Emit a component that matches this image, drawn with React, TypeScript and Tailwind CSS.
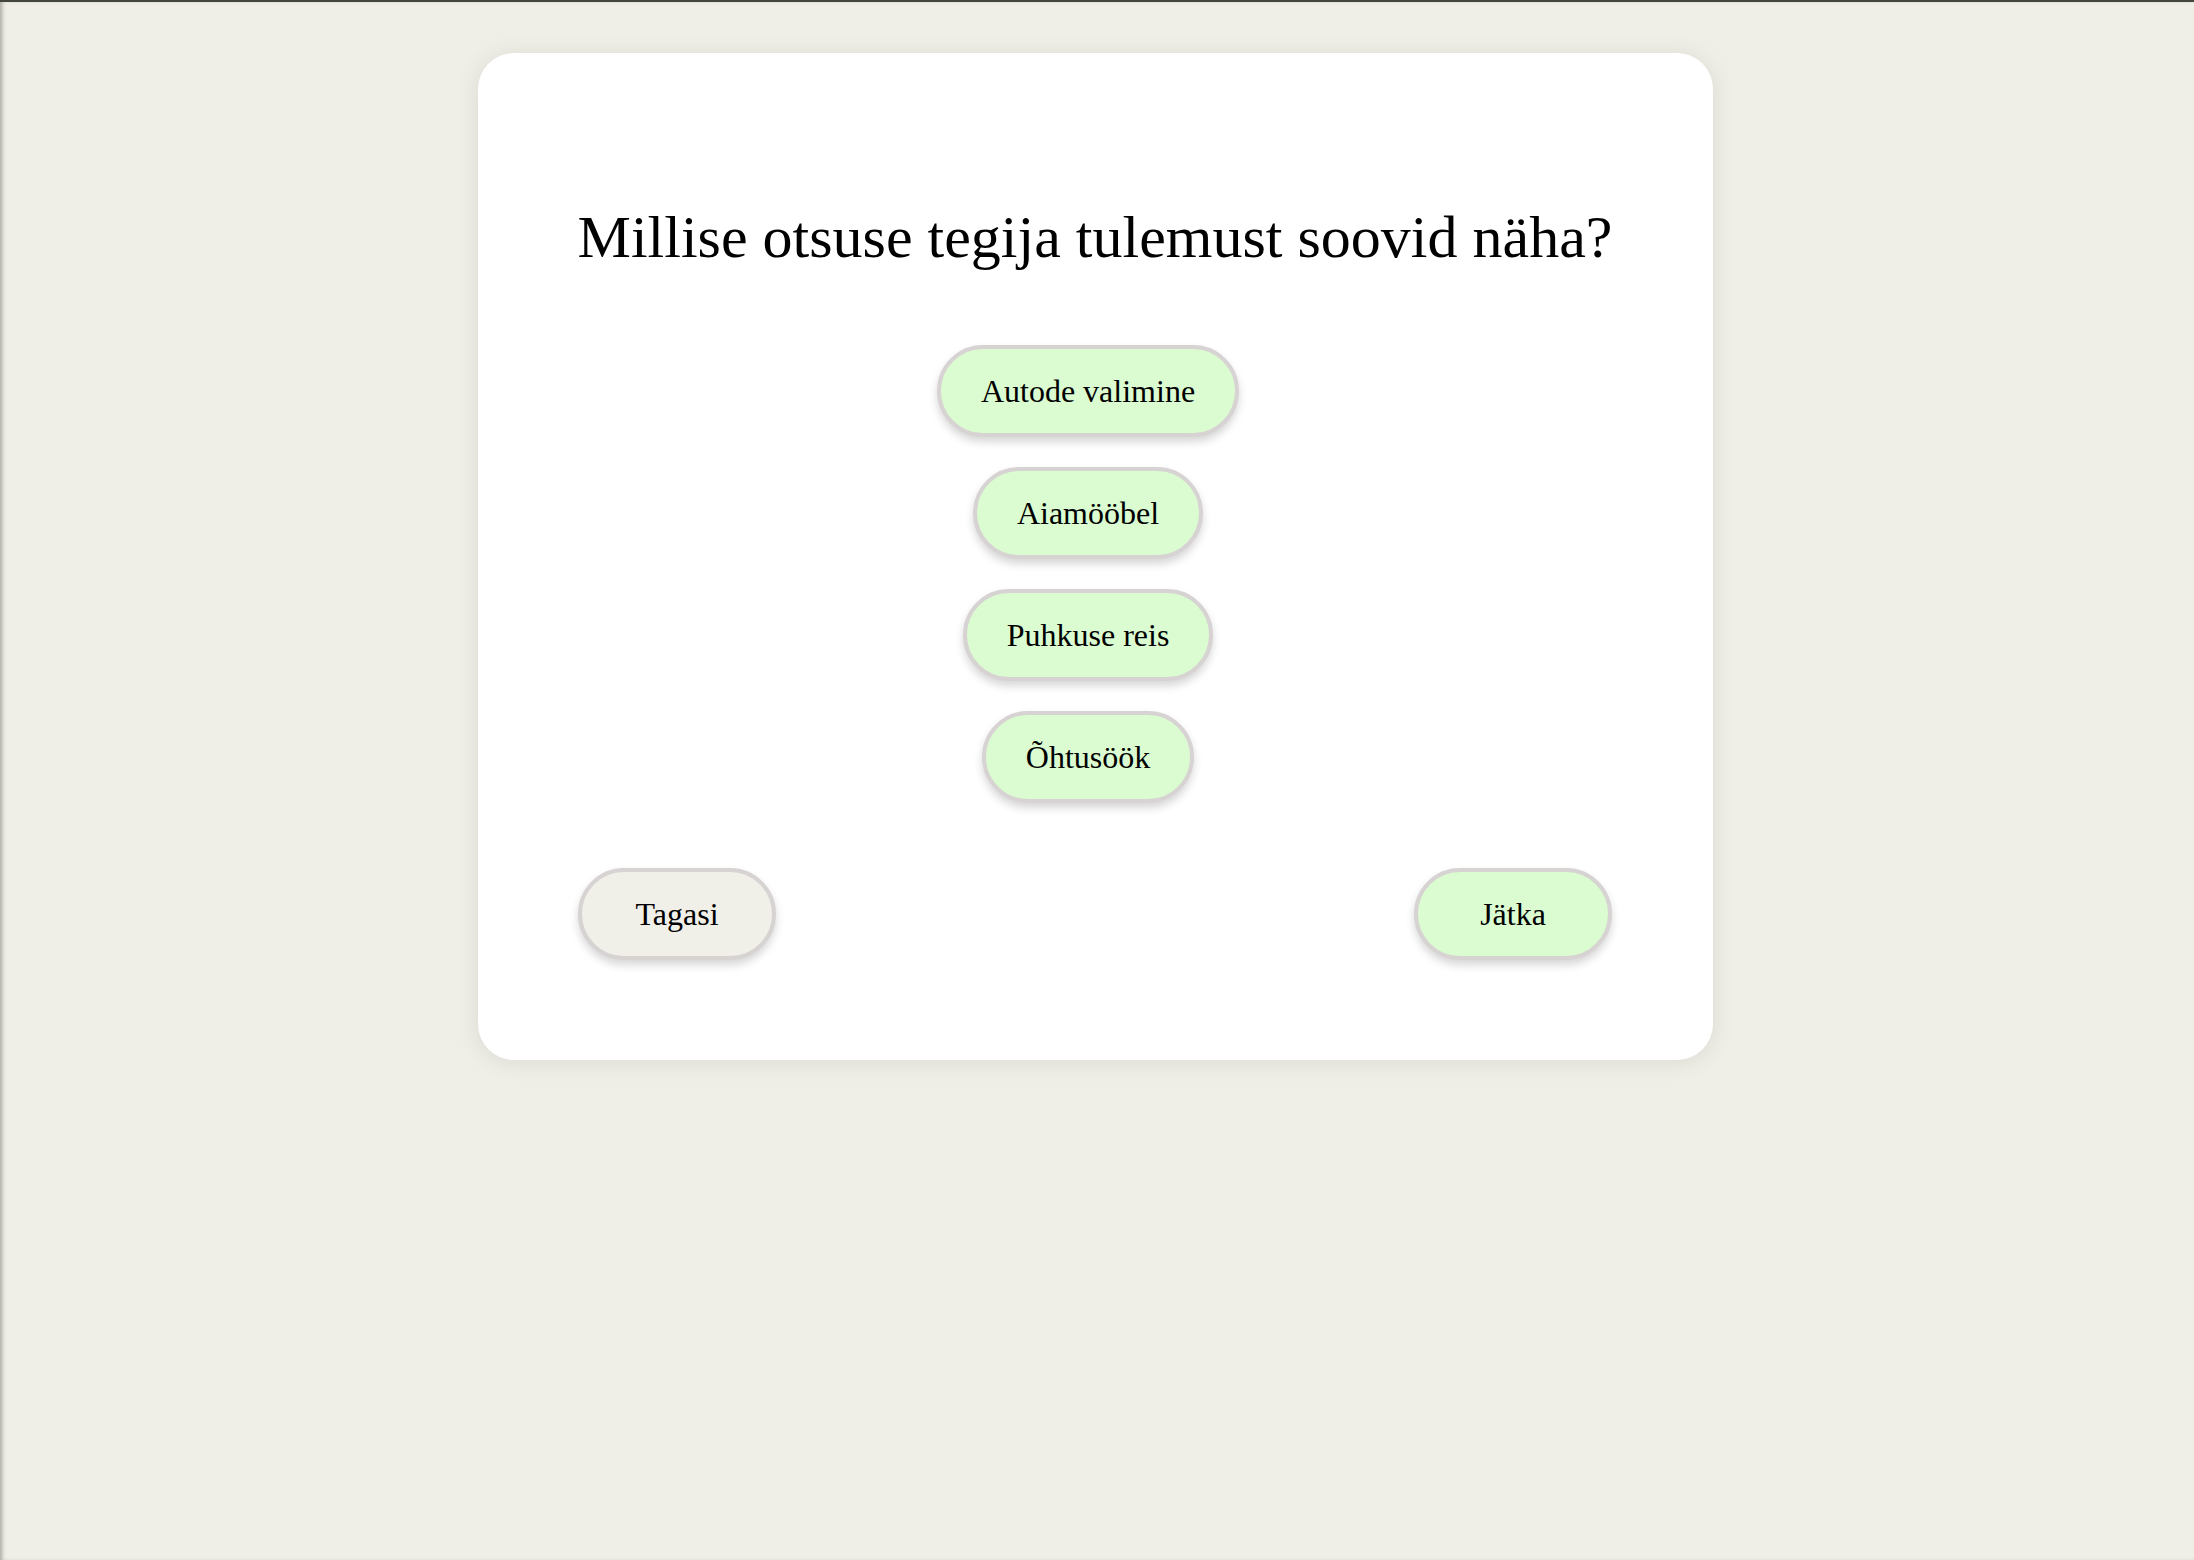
import React from "react";

const serif = { fontFamily: '"Liberation Serif", "Times New Roman", serif' };

function Pill({ children, muted = false, className = "" }: { children: React.ReactNode; muted?: boolean; className?: string }) {
  return (
    <button
      type="button"
      className={
        (muted ? "bg-[#f0efe8] " : "bg-[#dafcd0] ") +
        "rounded-full border-4 border-[#d8d3d3] text-[32px] leading-[36px] text-black shadow-[0_5px_8px_rgba(0,0,0,0.16)] " +
        className
      }
      style={serif}
    >
      {children}
    </button>
  );
}

export default function App() {
  const options = ["Autode valimine", "Aiamööbel", "Puhkuse reis", "Õhtusöök"];
  return (
    <div
      className="min-h-screen bg-[#f0efe7] border-t-2 border-[#43453f] shadow-[inset_4px_0_4px_-2px_rgba(0,0,0,0.3)] pt-[51px]"
      style={serif}
    >
      <div className="ml-[478px] w-[1235px] rounded-[36px] bg-white pl-[100px] pr-[101px] pt-[151px] pb-[100px] shadow-[0_2px_24px_rgba(0,0,0,0.09)]">
        <h1 className="-mx-[20px] whitespace-nowrap text-center text-[60px] leading-[66px] text-black">
          Millise otsuse tegija tulemust soovid näha?
        </h1>
        <div className="mt-[75px] flex flex-col items-center gap-[30px] pr-[14px]">
          {options.map((o) => (
            <Pill key={o} className="px-[40px] py-[24px]">
              {o}
            </Pill>
          ))}
        </div>
        <div className="mt-[65px] flex items-center justify-between">
          <Pill muted className="w-[198px] py-[24px]">
            Tagasi
          </Pill>
          <Pill className="w-[198px] py-[24px]">Jätka</Pill>
        </div>
      </div>
    </div>
  );
}
